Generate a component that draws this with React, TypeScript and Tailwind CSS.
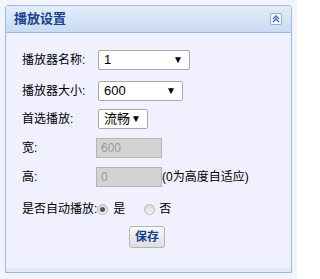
import React from 'react'

const font = { fontFamily: '"Liberation Sans", "Noto Sans CJK SC", sans-serif' }

function FakeSelect({ value, width }: { value: string; width: string }) {
  return (
    <div className={`flex h-[20px] items-center justify-between rounded-[2px] border border-[#a9a9a9] bg-white pl-[5px] pr-[6px] text-[13px] text-black ${width}`}>
      <span>{value}</span>
      <span className="text-[10px] leading-none">▼</span>
    </div>
  )
}

function DisabledInput({ value }: { value: string }) {
  return (
    <div className="flex h-[20px] w-[66px] items-center border border-[#b5b5b5] bg-[#d3d3d3] pl-[4px] text-[12px] text-[#9a9a9a]">
      {value}
    </div>
  )
}

function Radio({ checked }: { checked?: boolean }) {
  return (
    <span className="flex h-[11px] w-[11px] items-center justify-center rounded-full border border-[#b8b8b8] bg-gradient-to-b from-[#d8d8d8] to-[#f4f4f4]">
      {checked && <span className="h-[5px] w-[5px] rounded-full bg-[#555]" />}
    </span>
  )
}

export default function App() {
  return (
    <div className="h-[279px] w-[297px] bg-[#f3f3fb] p-[5px]" style={font}>
      <div className="flex h-[268px] w-[287px] flex-col rounded-t-[3px] border border-[#99bbe8] bg-[#f0f0fe]">
        <div className="flex h-[27px] items-center justify-between border-b border-[#99bbe8] bg-gradient-to-b from-[#e4ecf8] to-[#c9dbf3] pl-[8px] pr-[9px]">
          <span className="text-[13px] font-bold text-[#15428b]">播放设置</span>
          <span className="flex h-[12px] w-[12px] items-center justify-center rounded-[2px] border border-[#8fb0dc] bg-[#f4f8fd]">
            <svg width="8" height="8" viewBox="0 0 8 8" fill="none" stroke="#3a6db5" strokeWidth="1.4">
              <path d="M1 4 L4 1 L7 4" />
              <path d="M1 7 L4 4 L7 7" />
            </svg>
          </span>
        </div>
        <div className="flex flex-1 flex-col pl-[16px] pt-[17px] text-[12px] text-black">
          <div className="flex items-center">
            <span className="w-[76px]">播放器名称:</span>
            <FakeSelect value="1" width="w-[92px]" />
          </div>
          <div className="mt-[11px] flex items-center">
            <span className="w-[76px]">播放器大小:</span>
            <FakeSelect value="600" width="w-[85px]" />
          </div>
          <div className="mt-[8px] flex items-center">
            <span className="w-[76px]">首选播放:</span>
            <FakeSelect value="流畅" width="w-[50px]" />
          </div>
          <div className="mt-[9px] flex items-center">
            <span className="w-[74px]">宽:</span>
            <DisabledInput value="600" />
          </div>
          <div className="mt-[9px] flex items-center">
            <span className="w-[74px]">高:</span>
            <DisabledInput value="0" />
            <span>(0为高度自适应)</span>
          </div>
          <div className="mt-[13px] flex items-center">
            <span>是否自动播放:</span>
            <Radio checked />
            <span className="ml-[5px]">是</span>
            <span className="ml-[19px]"><Radio /></span>
            <span className="ml-[4px]">否</span>
          </div>
          <div className="mt-[8px] flex justify-center pr-[19px]">
            <button className="h-[22px] w-[36px] rounded-[3px] border border-[#b4b4b4] bg-gradient-to-b from-[#fafafa] to-[#dedede] text-[12px] font-bold text-[#15428b]">
              保存
            </button>
          </div>
        </div>
        <div className="h-[4px] bg-[#e3eaf6]" />
      </div>
    </div>
  )
}
